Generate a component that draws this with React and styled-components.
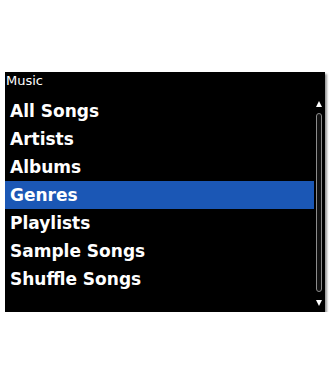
import React from 'react';
import styled, { createGlobalStyle } from 'styled-components';

const GlobalStyle = createGlobalStyle`
    body {
        margin:0;
        background:#fff;
        font-family:"DejaVu Sans", sans-serif;
    }
`;

const Page = styled.div`
    padding:72px 5px 0 5px;
`;

const Screen = styled.div`
    width:320px;
    height:240px;
    background:#000;
    color:#fff;
    display:flex;
    flex-direction:column;
    box-shadow:2px 2px 2px #9a9a9a;
`;

const Title = styled.div`
    height:25px;
    line-height:17px;
    font-size:13px;
    padding-left:1px;
`;

const Body = styled.div`
    flex:1;
    display:flex;
`;

const List = styled.ul`
    flex:1;
    margin:0;
    padding:0;
    list-style:none;
`;

const Item = styled.li`
    height:28px;
    line-height:28px;
    padding-left:5px;
    font-size:17px;
    font-weight:bold;
    background:${p => (p.$selected ? '#1b57b5' : 'transparent')};
`;

const ScrollBar = styled.div`
    width:11px;
    display:flex;
    flex-direction:column;
    align-items:center;
    padding:4px 1px 6px 0;
    box-sizing:border-box;
`;

const Arrow = styled.div`
    width:0;
    height:0;
    border-left:3px solid transparent;
    border-right:3px solid transparent;
    ${p => (p.$down ? 'border-top:6px solid #fff;' : 'border-bottom:6px solid #fff;')}
`;

const Track = styled.div`
    flex:1;
    width:4px;
    margin:6px 0 8px;
    border:1px solid #8c8c8c;
    border-radius:3px;
    background:#111;
`;

const items = ['All Songs', 'Artists', 'Albums', 'Genres', 'Playlists', 'Sample Songs', 'Shuffle Songs'];

export default function App() {
    return (
        <Page>
            <GlobalStyle />
            <Screen>
                <Title>Music</Title>
                <Body>
                    <List>
                        {items.map(name => (
                            <Item key={name} $selected={name === 'Genres'}>{name}</Item>
                        ))}
                    </List>
                    <ScrollBar>
                        <Arrow />
                        <Track />
                        <Arrow $down />
                    </ScrollBar>
                </Body>
            </Screen>
        </Page>
    );
}
